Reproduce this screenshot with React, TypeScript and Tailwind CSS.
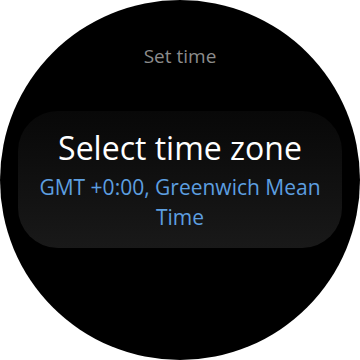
export default function App() {
  return (
    <div className="w-[360px] h-[360px] bg-white">
      <div
        className="w-[360px] h-[360px] rounded-full bg-black overflow-hidden flex flex-col items-center"
        style={{ fontFamily: '"Open Sans", "Noto Sans", sans-serif' }}
      >
        <div className="mt-[42px] h-[28px] flex items-center text-[19px] text-[#8c8c8c]">Set time</div>
        <div className="mt-[41px] w-[324px] h-[137px] rounded-[40px] bg-gradient-to-b from-[#080808] to-[#191919] flex flex-col items-center pt-[15px]">
          <div className="text-[32px] leading-[44px] text-white">Select time zone</div>
          <div className="mt-[2px] text-[21px] leading-[30px] text-[#5d9fe0] text-center w-[300px]">
            GMT +0:00, Greenwich Mean Time
          </div>
        </div>
      </div>
    </div>
  )
}
